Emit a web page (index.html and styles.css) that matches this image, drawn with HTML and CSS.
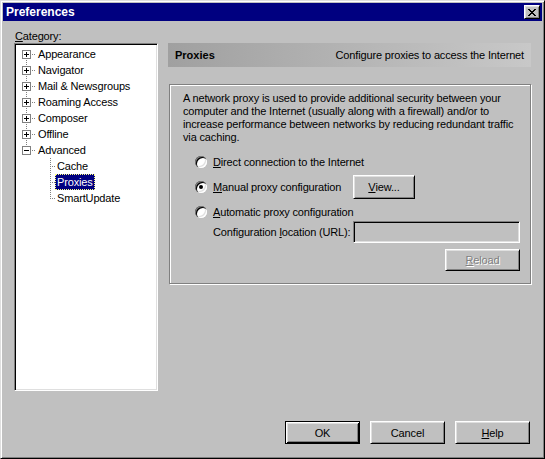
FILE: index.html
```html
<!DOCTYPE html>
<html>
<head>
<meta charset="utf-8">
<link rel="stylesheet" href="styles.css">
</head>
<body>
<div class="window">
  <div class="titlebar">
    <span class="title">Preferences</span>
    <span class="closebtn"><svg width="8" height="7" viewBox="0 0 8 7"><path d="M0 0h2v1h-2zM6 0h2v1h-2zM1 1h2v1h-2zM5 1h2v1h-2zM2 2h4v1h-4zM3 3h2v1h-2zM2 4h4v1h-4zM1 5h2v1h-2zM5 5h2v1h-2zM0 6h2v1h-2zM6 6h2v1h-2z" fill="#000"/></svg></span>
  </div>
  <div class="body">
    <div class="main">
      <div class="leftcol">
        <div class="cat-label"><u>C</u>ategory:</div>
        <div class="tree">
          <div class="node first"><span class="exp plus"></span><span class="hl"></span><span class="lbl">Appearance</span></div>
          <div class="node"><span class="exp plus"></span><span class="hl"></span><span class="lbl">Navigator</span></div>
          <div class="node"><span class="exp plus"></span><span class="hl"></span><span class="lbl">Mail &amp; Newsgroups</span></div>
          <div class="node"><span class="exp plus"></span><span class="hl"></span><span class="lbl">Roaming Access</span></div>
          <div class="node"><span class="exp plus"></span><span class="hl"></span><span class="lbl">Composer</span></div>
          <div class="node"><span class="exp plus"></span><span class="hl"></span><span class="lbl">Offline</span></div>
          <div class="node last"><span class="exp"></span><span class="hl"></span><span class="lbl">Advanced</span></div>
          <div class="child"><span class="cl"></span><span class="lbl">Cache</span></div>
          <div class="child"><span class="cl"></span><span class="lbl sel">Proxies</span></div>
          <div class="child lastchild"><span class="cl"></span><span class="lbl">SmartUpdate</span></div>
        </div>
      </div>
      <div class="rightcol">
        <div class="header">
          <span class="h-title">Proxies</span>
          <span class="h-desc">Configure proxies to access the Internet</span>
        </div>
        <div class="group">
          <div class="desc">A network proxy is used to provide additional security between your<br>computer and the Internet (usually along with a firewall) and/or to<br>increase performance between networks by reducing redundant traffic<br>via caching.</div>
          <div class="opt first-opt"><span class="radio"></span><span class="opt-lbl"><u>D</u>irect connection to the Internet</span></div>
          <div class="opt tall"><span class="radio checked"></span><span class="opt-lbl fixed"><u>M</u>anual proxy configuration</span><span class="btn view"><u>V</u>iew...</span></div>
          <div class="opt"><span class="radio"></span><span class="opt-lbl"><u>A</u>utomatic proxy configuration</span></div>
          <div class="cfg"><span class="cfg-lbl">Configuration <u>l</u>ocation (URL):</span><span class="input"></span></div>
          <div class="reload-row"><span class="btn disabled"><u>R</u>eload</span></div>
        </div>
      </div>
    </div>
    <div class="buttons">
      <span class="btn default">OK</span>
      <span class="btn">Cancel</span>
      <span class="btn"><u>H</u>elp</span>
    </div>
  </div>
</div>
</body>
</html>
```
FILE: styles.css
```css
html, body {
  margin: 0;
  padding: 0;
  background: #c0c0c0;
}
body {
  font-family: "Liberation Sans", Arial, sans-serif;
  font-size: 11px;
  letter-spacing: -0.15px;
  color: #000;
}
u { text-decoration: underline; text-underline-offset: 1px; }

.window {
  width: 545px;
  height: 459px;
  box-sizing: border-box;
  border: 1px solid;
  border-color: #dfdfdf #000 #000 #dfdfdf;
  box-shadow: inset 1px 1px #fff, inset -1px -1px #808080;
  padding: 2px;
  background: #c0c0c0;
  display: flex;
  flex-direction: column;
}

.titlebar {
  height: 18px;
  background: #000080;
  display: flex;
  align-items: center;
  justify-content: space-between;
  padding: 0 2px 0 3px;
}
.title {
  color: #fff;
  font-weight: bold;
  font-size: 12px;
  letter-spacing: 0;
}
.closebtn {
  width: 16px;
  height: 14px;
  box-sizing: border-box;
  background: #c0c0c0;
  border: 1px solid;
  border-color: #fff #000 #000 #fff;
  box-shadow: inset 1px 1px #dfdfdf, inset -1px -1px #808080;
  display: flex;
  align-items: center;
  justify-content: center;
}
.closebtn svg { display: block; margin-left: -1px; }

.body {
  padding: 9px 11px 0 11px;
  display: flex;
  flex-direction: column;
}
.main {
  display: flex;
  gap: 10px;
}
.leftcol {
  width: 144px;
  flex: none;
}
.cat-label {
  height: 13px;
  line-height: 13px;
  padding-left: 1px;
}
.tree {
  height: 348px;
  box-sizing: border-box;
  background: #fff;
  border: 1px solid;
  border-color: #808080 #fff #fff #808080;
  box-shadow: inset 1px 1px #000, inset -1px -1px #dfdfdf;
  padding: 2px 0 0 2px;
}

.node, .child {
  position: relative;
  height: 16px;
  display: flex;
  align-items: center;
}
.node { padding-left: 5px; }
.node::before {
  content: "";
  position: absolute;
  left: 9px;
  top: 0;
  bottom: 0;
  width: 1px;
  background: repeating-linear-gradient(to bottom, #808080 0 1px, transparent 1px 2px);
}
.node.first::before { top: 8px; }
.node.last::before { bottom: 8px; }

.exp {
  position: relative;
  z-index: 1;
  width: 9px;
  height: 9px;
  box-sizing: border-box;
  border: 1px solid #808080;
  background: #fff;
  flex: none;
}
.exp::before {
  content: "";
  position: absolute;
  left: 1px;
  top: 3px;
  width: 5px;
  height: 1px;
  background: #000;
}
.exp.plus::after {
  content: "";
  position: absolute;
  left: 3px;
  top: 1px;
  width: 1px;
  height: 5px;
  background: #000;
}
.hl {
  width: 5px;
  height: 1px;
  flex: none;
  background: repeating-linear-gradient(to right, transparent 0 1px, #808080 1px 2px);
}
.lbl {
  padding: 0 2px;
  line-height: 16px;
  height: 16px;
  white-space: nowrap;
}
.lbl.sel {
  background: #000080;
  color: #fff;
  outline: 1px dotted #ffff80;
  outline-offset: -1px;
}

.child { padding-left: 33px; }
.child::before {
  content: "";
  position: absolute;
  left: 33px;
  top: 0;
  bottom: 0;
  width: 1px;
  background: repeating-linear-gradient(to bottom, #808080 0 1px, transparent 1px 2px);
}
.child.lastchild::before { bottom: 8px; }
.cl {
  width: 5px;
  height: 1px;
  flex: none;
  background: repeating-linear-gradient(to right, #808080 0 1px, transparent 1px 2px);
}

.rightcol {
  flex: 1;
  padding-top: 13px;
}
.header {
  height: 24px;
  display: flex;
  align-items: center;
  justify-content: space-between;
  padding: 0 7px;
  background: linear-gradient(to right, #a0a0a0, #c8c8c8);
}
.h-title { font-weight: bold; letter-spacing: 0; }

.group {
  margin: 17px 0 0 1px;
  border: 1px solid #808080;
  box-shadow: inset 1px 1px #fff, 1px 1px #fff;
  padding: 7px 10px 12px 12px;
}
.desc {
  line-height: 13px;
  white-space: nowrap;
  padding-left: 1px;
}
.opt {
  display: flex;
  align-items: center;
  height: 16px;
  margin: 5px 0 0 13px;
}
.opt.first-opt { margin-top: 10px; }
.opt.tall { height: 24px; }
.radio {
  position: relative;
  width: 12px;
  height: 12px;
  flex: none;
  border-radius: 50%;
  background: #fff;
  box-shadow: inset 1px 1px #808080, inset 2px 2px #000, inset -1px -1px #fff, inset -2px -2px #dfdfdf;
}
.radio.checked::after {
  content: "";
  position: absolute;
  left: 4px;
  top: 4px;
  width: 4px;
  height: 4px;
  border-radius: 50%;
  background: #000;
}
.opt-lbl {
  margin-left: 6px;
  white-space: nowrap;
}
.opt-lbl.fixed { width: 140px; flex: none; }

.cfg {
  display: flex;
  align-items: center;
  height: 22px;
  margin: 1px 0 0 31px;
}
.cfg-lbl { width: 140px; flex: none; white-space: nowrap; }
.input {
  width: 167px;
  height: 22px;
  box-sizing: border-box;
  background: #c0c0c0;
  border: 1px solid;
  border-color: #808080 #fff #fff #808080;
  box-shadow: inset 1px 1px #000, inset -1px -1px #dfdfdf;
}
.reload-row {
  display: flex;
  justify-content: flex-end;
  margin-top: 6px;
}

.btn {
  display: flex;
  align-items: center;
  justify-content: center;
  width: 75px;
  height: 23px;
  box-sizing: border-box;
  background: #c0c0c0;
  border: 1px solid;
  border-color: #fff #000 #000 #fff;
  box-shadow: inset 1px 1px #dfdfdf, inset -1px -1px #808080;
  flex: none;
}
.btn.view { width: 62px; height: 24px; }
.btn.disabled {
  height: 22px;
  color: #808080;
  text-shadow: 1px 1px #fff;
}
.btn.default {
  border-color: #000;
  box-shadow: inset 1px 1px #fff, inset -1px -1px #000, inset 2px 2px #dfdfdf, inset -2px -2px #808080;
}

.buttons {
  display: flex;
  justify-content: flex-end;
  gap: 10px;
  margin-top: 30px;
  padding-right: 1px;
}
```
